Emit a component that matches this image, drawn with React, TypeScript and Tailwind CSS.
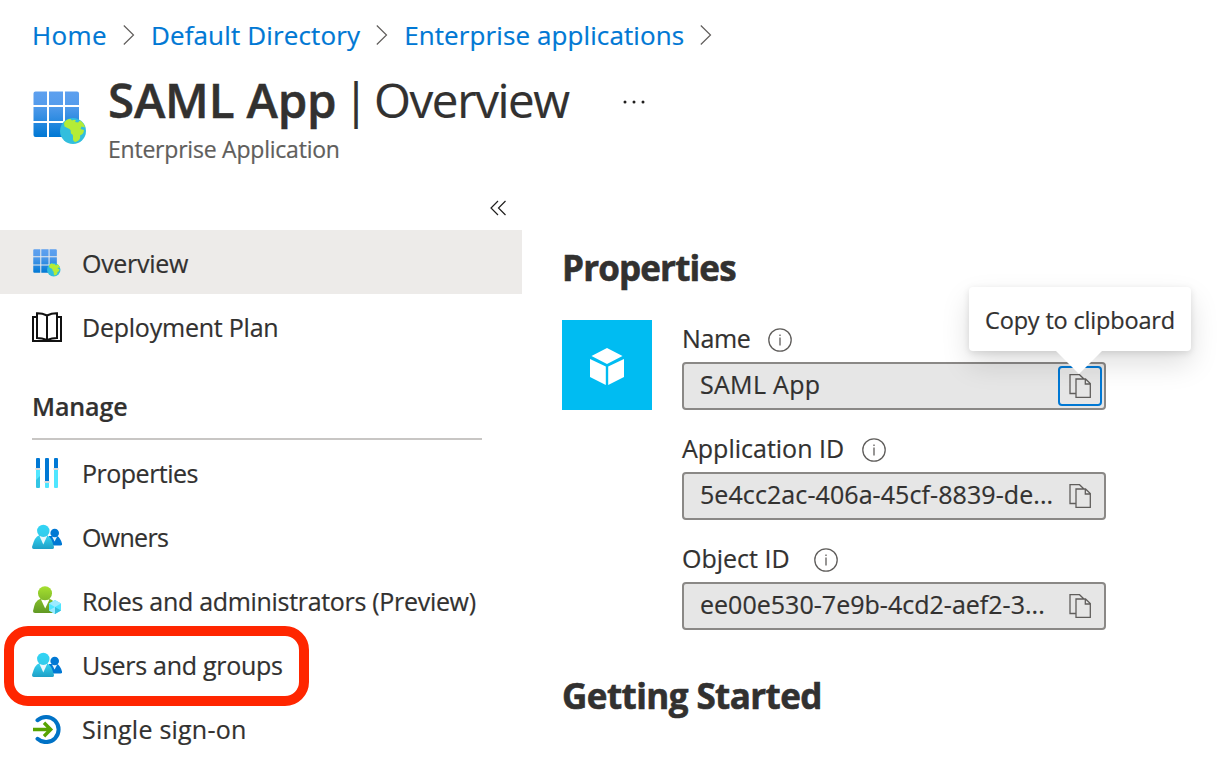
import React from "react";

function AppGrid({ className, id }: { className: string; id: string }) {
  return (
    <svg className={className} viewBox="0 0 54 54">
      <defs>
        <linearGradient id={id} x1="0" y1="0" x2="0" y2="46" gradientUnits="userSpaceOnUse">
          <stop offset="0" stopColor="#5ea0ef" />
          <stop offset="0.3" stopColor="#559cec" />
          <stop offset="1" stopColor="#0078d4" />
        </linearGradient>
      </defs>
      <path
        fill={`url(#${id})`}
        d="M2.500.500H14V14H.500V2.500Q.500.500 2.500.500ZM16 .500H30V14H16ZM32 .500H44Q46 .500 46 2.500V14H32ZM.500 16H14V30H.500ZM16 16H30V30H16ZM32 16H46V30H32ZM.500 32H14V46H2.500Q.500 46 .500 44ZM16 32H30V46H16Z"
      />
      <circle cx="40" cy="40" r="13" fill="#32bedd" />
      <path
        fill="#b4ec36"
        d="M31 32C32.500 29 35 27.800 37.500 28L39 29.500L41 28.800L43 29.500L42 31L45 31.500L47 29.500C50 31.500 51.500 33.500 52 36.500L48.500 35.500L47.500 38L51 39C51 42 49 44 47 44.500C48 48 45 50.500 42 51C38.500 49 41 46.500 39.500 43.500C36.500 42.500 39 39.500 36.500 38L31.500 35.500Z"
      />
    </svg>
  );
}

function Book() {
  return (
    <svg className="size-[30px]" viewBox="0 0 30 30" fill="none" stroke="#111" strokeWidth="2">
      <path d="M4 5H1V29H29V5H26M15 3.500Q10 1 5 1.200V26Q10 26 15 28Q20 26 25 26V1.200Q20 1 15 3.500V28" />
    </svg>
  );
}

function Sliders() {
  return (
    <svg className="size-[30px]" viewBox="0 0 30 30">
      <path
        fill="#0078d4"
        d="M4 1Q4 0 5 0H7Q8 0 8 1V10H4ZM13 1Q13 0 14 0H16Q17 0 17 1V23H13ZM22 1Q22 0 23 0H25Q26 0 26 1V10H22Z"
      />
      <path fill="#dadada" d="M3.500 10H8.500V12H3.500ZM12.500 23H17.500V25H12.500ZM21.500 10H26.500V12H21.500Z" />
      <path fill="#32c5e4" d="M4 12H8V29Q8 30 7 30H5Q4 30 4 29Z" />
      <path
        fill="#50e6ff"
        d="M13 25H17V29Q17 30 16 30H14Q13 30 13 29ZM22 12H26V29Q26 30 25 30H23Q22 30 22 29ZM4 12H8V18L4 22Z"
      />
    </svg>
  );
}

function People({ id }: { id: string }) {
  return (
    <svg className="size-[30px]" viewBox="0 0 30 30">
      <defs>
        <linearGradient id={id} x1="0" y1="3" x2="0" y2="28" gradientUnits="userSpaceOnUse">
          <stop offset="0" stopColor="#32d4f5" />
          <stop offset="0.5" stopColor="#32cbea" />
          <stop offset="1" stopColor="#1c9cc4" />
        </linearGradient>
      </defs>
      <path fill="#0078d4" d="M17 14H25Q28 15 30 21.500Q30.200 23.500 28.500 23.500H17Z" />
      <path fill="#e6f3fb" d="M20 14.500H25.200L22.600 19.500Z" />
      <circle cx="22.700" cy="11" r="4.300" fill="#0078d4" />
      <path fill={`url(#${id})`} d="M7 13.500H15Q19 14 22 25Q22.200 27 20.500 27H1.700Q0 27 0 25Q3 14 7 13.500Z" />
      <path fill="#e9f8fc" d="M7.500 14H15.200L11.300 22.500Z" />
      <circle cx="11.300" cy="8.900" r="6.200" fill={`url(#${id})`} />
    </svg>
  );
}

function RoleAdmin() {
  return (
    <svg className="size-[30px]" viewBox="0 0 30 30">
      <defs>
        <linearGradient id="role" x1="0" y1="1" x2="0" y2="28" gradientUnits="userSpaceOnUse">
          <stop offset="0" stopColor="#a4de2f" />
          <stop offset="1" stopColor="#5e9624" />
        </linearGradient>
      </defs>
      <path fill="url(#role)" d="M8 13H18Q23 14 25 25Q25 27 23 27H3Q1 27 1 25Q3 14 8 13Z" />
      <path fill="#fff" d="M9 13.500H17.500L13.200 22.500Z" />
      <circle cx="13" cy="7.200" r="7" fill="url(#role)" />
      <path fill="#50e6ff" d="M23 14L29 17.500V24.500L23 28L17 24.500V17.500Z" />
      <path fill="#9cebff" d="M23 14L29 17.500L23 21L17 17.500ZM17 24.500L23 21V28Z" />
      <path fill="#32bedd" d="M23 21L29 24.500L23 28Z" />
    </svg>
  );
}

function SignOn() {
  return (
    <svg className="size-[30px]" viewBox="0 0 30 30" fill="none">
      <path d="M5.500 6.200A12.600 12.600 0 1 1 5.500 24.800" stroke="#0072c6" strokeWidth="4" strokeLinecap="round" />
      <path d="M1 15.500H18.500M12 8.800L18.700 15.500L12 22.200" stroke="#57a300" strokeWidth="3.400" />
    </svg>
  );
}

function CopyIcon() {
  return (
    <svg className="size-6" viewBox="0 0 24 24" fill="none" stroke="#605e5c" strokeWidth="1.300">
      <path d="M8 19.500H2V.700H11.500L16 5M8 5H17.500L22.300 9.500V23.300H8ZM17.300 5V10H22.300" />
    </svg>
  );
}

function Info() {
  return (
    <svg className="size-6" viewBox="0 0 24 24" fill="none" stroke="#605e5c" strokeWidth="1.300">
      <circle cx="12" cy="12" r="11.200" />
      <path d="M12 9.500V17.500M12 6.500V8" />
    </svg>
  );
}

function Separator() {
  return (
    <span className="w-11 pl-4">
      <svg className="h-5 w-3" viewBox="0 0 12 20" fill="none" stroke="#605e5c" strokeWidth="1.200">
        <path d="M.8.500L10.500 10L.8 19.500" />
      </svg>
    </span>
  );
}

type NavItemProps = {
  icon: React.ReactNode;
  label: string;
  tracking: string;
  active?: boolean;
  marked?: boolean;
};

function NavItem({ icon, label, tracking, active = false, marked = false }: NavItemProps) {
  return (
    <div className={`relative flex h-16 items-center pl-8 ${active ? "bg-[#edebe9]" : ""}`}>
      <span className="flex w-[50px] shrink-0 pt-[2px]">{icon}</span>
      <span className={`whitespace-nowrap pt-px ${tracking}`}>{label}</span>
      {marked && (
        <span className="absolute top-[-6px] left-1 h-20 w-[305px] rounded-[24px] border-10 border-[#ff2600]" />
      )}
    </div>
  );
}

type FieldProps = {
  label: string;
  labelClass: string;
  value: string;
  valueClass: string;
  focused?: boolean;
};

function Field({ label, labelClass, value, valueClass, focused = false }: FieldProps) {
  return (
    <div className="h-[110px]">
      <div className="flex h-[42px] items-center pb-[2px]">
        <span className={`shrink-0 pb-[5px] whitespace-nowrap ${labelClass}`}>{label}</span>
        <Info />
      </div>
      <div className="flex h-12 w-[424px] items-center rounded-[4px] border-2 border-[#8a8886] bg-[#e6e6e6] pl-4">
        <span className={`w-[358px] shrink-0 pb-[5px] whitespace-nowrap ${valueClass}`}>{value}</span>
        <span
          className={`flex h-10 w-11 items-center justify-center rounded-[4px] border-2 ${focused ? "border-[#0078d4]" : "border-transparent"}`}
        >
          <CopyIcon />
        </span>
      </div>
    </div>
  );
}

export default function App() {
  return (
    <main className="h-[770px] w-[1228px] overflow-hidden bg-white font-['Open_Sans','Noto_Sans',sans-serif] text-[25px] leading-[34px] text-[#323130] [-webkit-text-stroke:0.200px]">
      <nav className="flex h-[70px] items-center pl-8 text-[26px] text-[#0078d4]">
        <a className="pb-px tracking-[0.350px]">Home</a>
        <Separator />
        <a className="pb-px tracking-[0.140px]">Default Directory</a>
        <Separator />
        <a className="pb-px tracking-[0.100px]">Enterprise applications</a>
        <Separator />
      </nav>
      <header className="flex h-[120px] pl-[33px]">
        <AppGrid id="grid-lg" className="mt-[21px] size-[54px]" />
        <div className="ml-[21px]">
          <h1 className="flex h-[62px] items-center pb-[2px] text-[47.500px] leading-[60px] whitespace-nowrap">
            <span className="w-[235px] font-semibold tracking-[-0.200px] [-webkit-text-stroke:0.500px]">SAML App</span>
            <span className="w-[31px]">|</span>
            <span className="w-[249px] tracking-[-1.400px]">Overview</span>
            <svg className="mt-[3px] h-1 w-6" viewBox="0 0 24 4" fill="#201f1e">
              <circle cx="2" cy="2" r="1.500" />
              <circle cx="11" cy="2" r="1.500" />
              <circle cx="20" cy="2" r="1.500" />
            </svg>
          </h1>
          <p className="text-[23px] leading-[34px] tracking-[-0.220px] text-[#605e5c]">Enterprise Application</p>
        </div>
      </header>
      <div className="flex">
        <aside className="w-[522px] shrink-0">
          <div className="flex h-10 justify-end pt-[10px] pr-4">
            <svg className="size-4" viewBox="0 0 16 16" fill="none" stroke="#201f1e" strokeWidth="1.200">
              <path d="M8 1L1 8L8 15M15.500 1L8.500 8L15.500 15" />
            </svg>
          </div>
          <NavItem
            active
            icon={<AppGrid id="grid-sm" className="ml-px size-7" />}
            label="Overview"
            tracking="tracking-[-0.300px]"
          />
          <NavItem icon={<Book />} label="Deployment Plan" tracking="tracking-[-0.230px]" />
          <div className="mr-10 ml-8 flex h-[82px] items-center border-b-2 border-[#c8c6c4] pt-[15px] font-semibold tracking-[-0.100px]">
            Manage
          </div>
          <NavItem icon={<Sliders />} label="Properties" tracking="tracking-[-0.500px]" />
          <NavItem icon={<People id="owners" />} label="Owners" tracking="tracking-[-0.700px]" />
          <NavItem icon={<RoleAdmin />} label="Roles and administrators (Preview)" tracking="tracking-[-0.310px]" />
          <NavItem icon={<People id="users" />} label="Users and groups" tracking="tracking-[-0.280px]" marked />
          <NavItem icon={<SignOn />} label="Single sign-on" tracking="tracking-[0.230px]" />
        </aside>
        <section className="ml-10 pt-[54px]">
          <h2 className="h-[76px] text-[35px] leading-[47px] font-bold tracking-[-0.850px] [-webkit-text-stroke:0.600px]">
            Properties
          </h2>
          <div className="flex">
            <div className="flex size-[90px] items-center justify-center bg-[#00bcf2]">
              <svg className="size-10" viewBox="0 0 40 40" fill="#fff">
                <path d="M20 3L35.500 11L20 19L4.500 11ZM3 14L18.800 21.500V40L3 32ZM37 14L21.200 21.500V40L37 32Z" />
              </svg>
            </div>
            <div className="relative ml-[30px]">
              <Field
                label="Name"
                labelClass="w-[86px] tracking-[-0.400px]"
                value="SAML App"
                valueClass="tracking-[0.300px]"
                focused
              />
              <Field
                label="Application ID"
                labelClass="w-[180px]"
                value="5e4cc2ac-406a-45cf-8839-de..."
                valueClass="tracking-[0.080px]"
              />
              <Field
                label="Object ID"
                labelClass="w-[132px]"
                value="ee00e530-7e9b-4cd2-aef2-3..."
                valueClass="tracking-[0.020px]"
              />
              <div className="absolute top-[-33px] left-[287px] flex h-16 w-[222px] items-center justify-center rounded-[4px] bg-white pt-[2px] text-[23.500px] tracking-[-0.180px] shadow-[0_13px_29px_rgba(0,0,0,.13),0_2px_7px_rgba(0,0,0,.11)]">
                Copy to clipboard
                <svg className="absolute top-16 left-[87px] h-[23px] w-[46px]" viewBox="0 0 46 23" fill="#fff">
                  <path d="M0 0H46L23 23Z" />
                </svg>
              </div>
            </div>
          </div>
          <h2 className="pt-[22px] text-[35px] leading-[47px] font-bold tracking-[-0.570px] [-webkit-text-stroke:0.600px]">
            Getting Started
          </h2>
        </section>
      </div>
    </main>
  );
}
